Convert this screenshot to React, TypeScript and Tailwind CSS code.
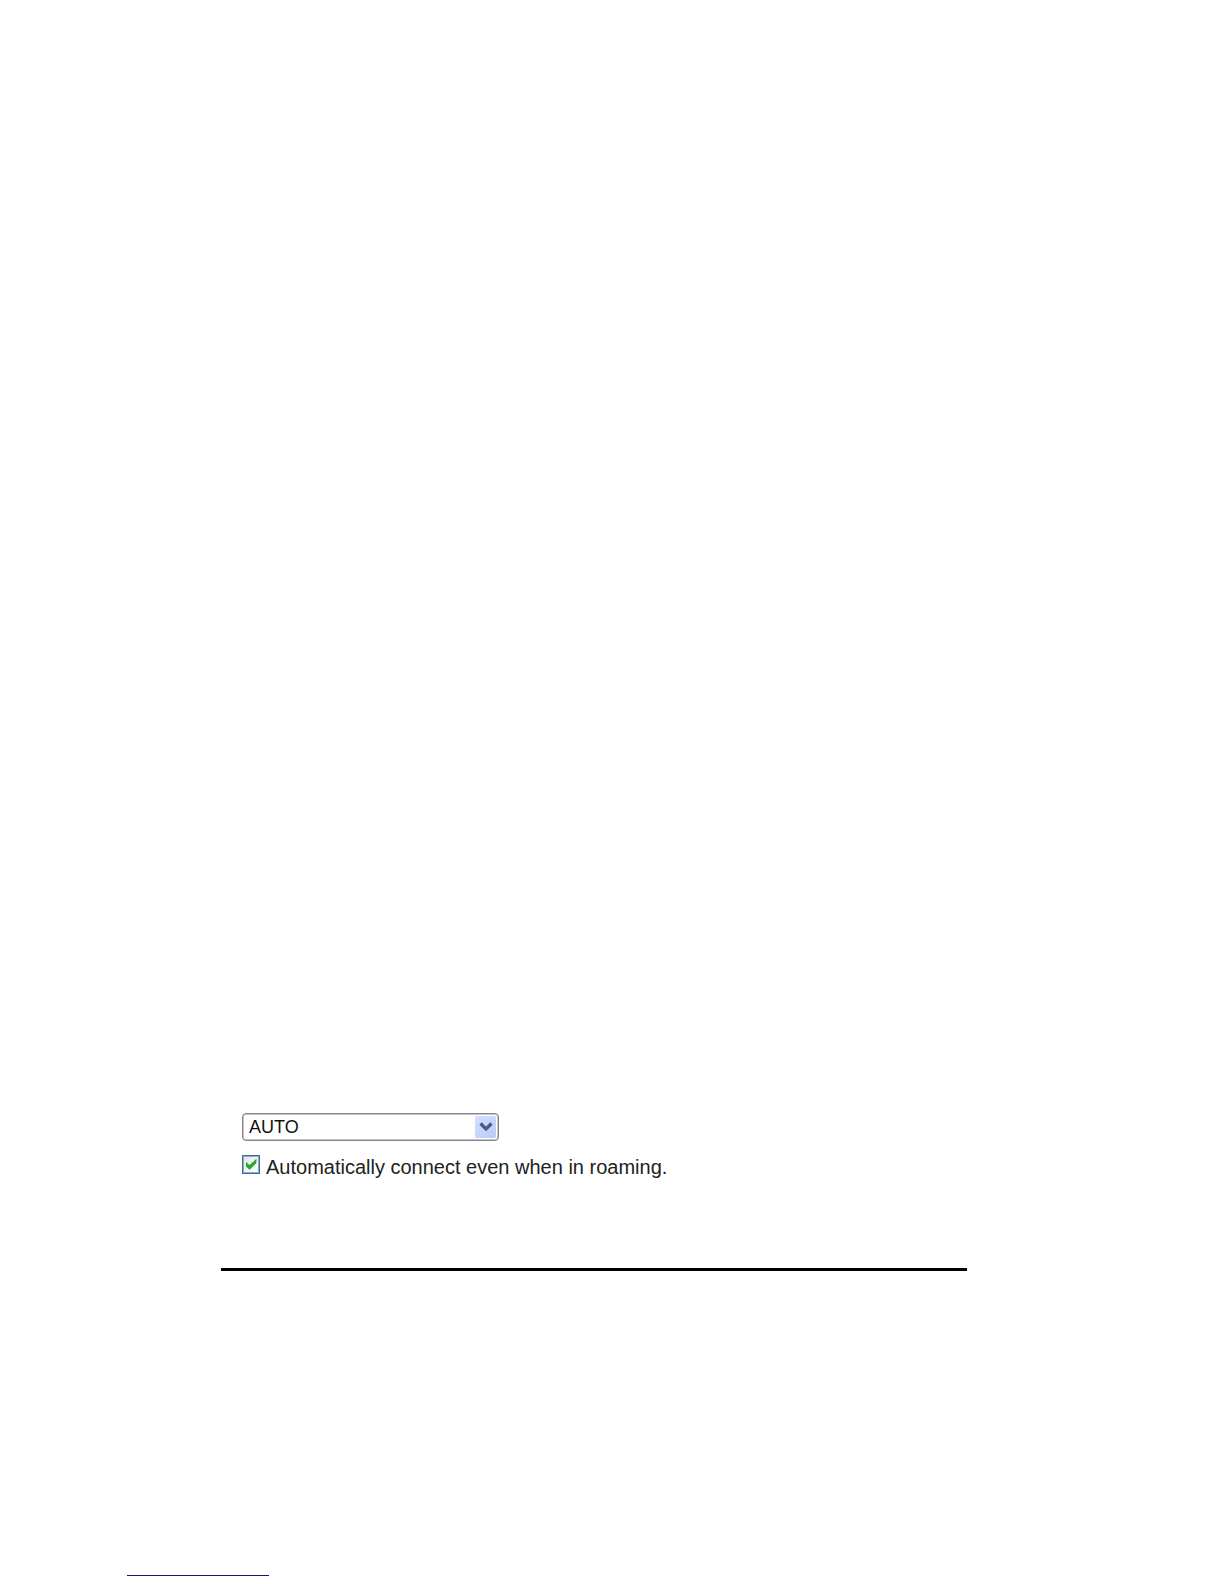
import { useState } from 'react';

const NETWORK_MODES = ['AUTO'];

function ModeSelect() {
  const [mode, setMode] = useState('AUTO');

  return (
    <div className="relative w-[257px]">
      <select
        aria-label="Network mode"
        value={mode}
        onChange={(e) => setMode(e.target.value)}
        className="block w-full h-7 appearance-none rounded-[4px] border border-[#86868a] bg-white pl-1.5 pr-7 text-lg leading-6 text-[#111111] inset-shadow-[0_0_0_1px_#c4c4c8]"
      >
        {NETWORK_MODES.map((m) => (
          <option key={m} value={m}>
            {m}
          </option>
        ))}
      </select>
      {/* Drop-down arrow */}
      <span className="pointer-events-none absolute inset-y-[3px] right-[3px] flex w-[21px] items-center justify-center rounded-[2px] bg-linear-to-br from-[#d6e1ff] to-[#b6c9f7]">
        <svg viewBox="0 0 14 10" className="h-2.5 w-3.5" fill="none" stroke="#4a5a85" strokeWidth="3.2">
          <path d="M1.5 1.5 L7 7 L12.5 1.5" />
        </svg>
      </span>
    </div>
  );
}

function RoamingCheckbox() {
  const [checked, setChecked] = useState(true);

  return (
    <label className="flex items-start gap-1.5">
      <span className="relative h-[19px] w-[18px] shrink-0">
        <input
          type="checkbox"
          checked={checked}
          onChange={(e) => setChecked(e.target.checked)}
          className="block h-full w-full appearance-none border border-[#3b6a9c] bg-linear-to-br from-[#e2e5e1] to-white inset-shadow-[0_0_0_1px_#8fabc8]"
        />
        {checked && (
          <svg viewBox="0 0 18 19" className="pointer-events-none absolute inset-0 h-full w-full" fill="#2ba52e">
            <path d="M4 7 L7.6 10 L14.4 3.8 V8 L7.6 14.8 L4 11.4 Z" />
          </svg>
        )}
      </span>
      <span className="text-xl leading-6 text-[#222222]">Automatically connect even when in roaming.</span>
    </label>
  );
}

export default function App() {
  return (
    <div className="flex min-h-screen flex-col bg-white pt-[1113px] font-['Liberation_Sans',Arial,sans-serif]">
      <main className="ml-[221px] mr-[257px]">
        <form className="flex flex-col gap-3.5 pl-[21px]">
          <ModeSelect />
          <RoamingCheckbox />
        </form>
        <hr className="mt-[89px] border-0 border-t-3 border-black" />
      </main>
      <footer className="mt-auto mb-2 ml-[127px]">
        <a href="#" aria-label="Back to contents" className="block h-4 w-[142px] border-b border-[#10108a]" />
      </footer>
    </div>
  );
}
